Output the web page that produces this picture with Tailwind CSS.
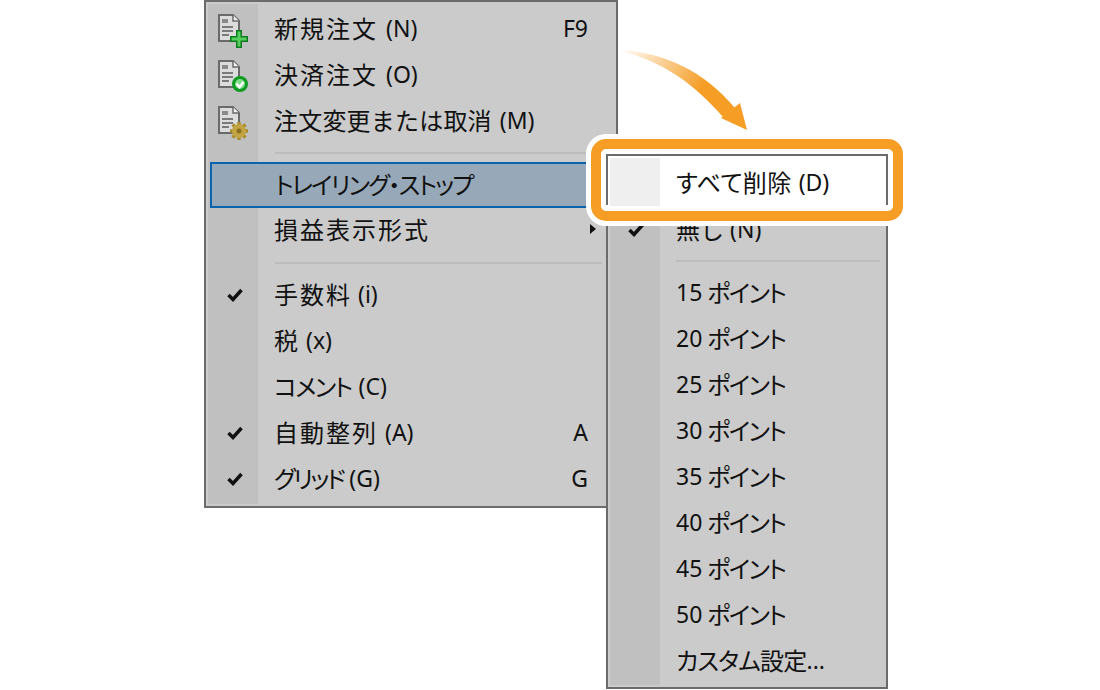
<!DOCTYPE html>
<html lang="ja">
<head>
  <meta charset="UTF-8" />
  <title>Trailing Stop Menu</title>
  <script src="https://cdn.jsdelivr.net/npm/@tailwindcss/browser@4"></script>
</head>
<body class="bg-white">
  <div class="relative w-[1100px] h-[690px] overflow-hidden bg-white text-[#111] text-[23px] font-['Noto_Sans','Noto_Sans_CJK_JP',sans-serif]">

    <!-- shared document icon -->
    <svg class="hidden">
      <symbol id="doc" viewBox="0 0 32 36">
        <path d="M2 3h14l6 6v20H2z" fill="#dcdcdc" stroke="#6a6a6a" stroke-width="2"/>
        <path d="M16 3v6h6" fill="#f4f4f4" stroke="#6a6a6a" stroke-width="1.5"/>
        <rect x="5" y="7" width="6" height="4" fill="#8a8a8a"/>
        <path d="M5 15h11M5 19h11M5 23h7" stroke="#7a7a7a" stroke-width="2"/>
      </symbol>
    </svg>

    <!-- main context menu -->
    <div class="absolute left-[204px] top-0 w-[414px] h-[508px] border-2 border-[#6b6b6b] bg-[#cbcbcb] p-[2px]">
      <div class="h-full bg-[linear-gradient(to_right,#c0c0c0_50px,#cbcbcb_50px)] pt-[1px]">
        <div class="flex items-center h-[46px]">
          <span class="w-[50px] flex justify-center pt-[4px]">
            <svg class="w-[32px] h-[36px]" viewBox="0 0 32 36">
              <use href="#doc"/>
              <path d="M19 18h6v6h6v6h-6v6h-6v-6h-6v-6h6z" fill="#0d7a1c"/>
              <path d="M20.500 19.500h3v6h6v3h-6v6h-3v-6h-6v-3h6z" fill="#55d060"/>
            </svg>
          </span>
          <span class="ml-[16px] tracking-[2px] text-[24px] leading-none font-['Noto_Sans_CJK_JP',sans-serif]">新規注文</span>
          <span class="ml-[8px]">(N)</span>
          <span class="ml-auto mr-[26px]">F9</span>
        </div>
        <div class="flex items-center h-[46px]">
          <span class="w-[50px] flex justify-center pt-[4px]">
            <svg class="w-[32px] h-[36px]" viewBox="0 0 32 36">
              <use href="#doc"/>
              <circle cx="23" cy="26" r="8" fill="#0f9a24"/>
              <circle cx="23" cy="26" r="5" fill="#7fdc88"/>
              <path d="M19.500 25.500l3 3.500 4-5" fill="none" stroke="#fff" stroke-width="2.500"/>
            </svg>
          </span>
          <span class="ml-[16px] tracking-[2px] text-[24px] leading-none font-['Noto_Sans_CJK_JP',sans-serif]">決済注文</span>
          <span class="ml-[8px]">(O)</span>
        </div>
        <div class="flex items-center h-[46px]">
          <span class="w-[50px] flex justify-center pt-[4px]">
            <svg class="w-[32px] h-[36px]" viewBox="0 0 32 36">
              <use href="#doc"/>
              <path d="M22 18v18M13 27h18M15.600 20.600l12.800 12.800M28.400 20.600l-12.800 12.800" stroke="#a88c2c" stroke-width="3.500"/>
              <circle cx="22" cy="27" r="7" fill="#c2a443"/>
              <circle cx="22" cy="27" r="2.500" fill="#8a6f1e"/>
            </svg>
          </span>
          <span class="ml-[16px] tracking-[0.2px] text-[24px] leading-none font-['Noto_Sans_CJK_JP',sans-serif]">注文変更または取消</span>
          <span class="ml-[8px]">(M)</span>
        </div>
        <div class="h-[19px] ml-[67px] mr-[12px] pt-[9px]"><div class="w-full h-[2px] bg-[#bdbdbd]"></div></div>
        <div class="flex items-center h-[46px] -mb-[2px] ml-[2px] border-2 border-r-0 border-[#0a64ad] bg-[#97a9b9]">
          <span class="ml-[63px] text-[24px] leading-none pb-[3px] tracking-[-1.700px] [font-feature-settings:'palt'] font-['Noto_Sans_CJK_JP',sans-serif]">トレイリング・ストップ</span>
        </div>
        <div class="flex items-center h-[46px]">
          <span class="w-[50px]"></span>
          <span class="ml-[16px] tracking-[2px] text-[24px] leading-none font-['Noto_Sans_CJK_JP',sans-serif]">損益表示形式</span>
          <svg class="ml-auto mr-[18px] w-[6px] h-[10px]" viewBox="0 0 6 10"><path d="M0 0l6 5-6 5z" fill="#111"/></svg>
        </div>
        <div class="h-[19px] ml-[67px] mr-[12px] pt-[10px]"><div class="w-full h-[2px] bg-[#bdbdbd]"></div></div>
        <div class="flex items-center h-[46px]">
          <span class="w-[50px] flex justify-center pl-[4px] pt-[2px]">
            <svg class="w-[16px] h-[14px]" viewBox="0 0 16 14"><path d="M1.500 7l4.500 4.500L14.500 2" fill="none" stroke="#111" stroke-width="3.500"/></svg>
          </span>
          <span class="ml-[16px] tracking-[2px] text-[24px] leading-none font-['Noto_Sans_CJK_JP',sans-serif]">手数料</span>
          <span class="ml-[6px]">(i)</span>
        </div>
        <div class="flex items-center h-[46px]">
          <span class="w-[50px]"></span>
          <span class="ml-[16px] text-[24px] leading-none font-['Noto_Sans_CJK_JP',sans-serif]">税</span>
          <span class="ml-[8px]">(x)</span>
        </div>
        <div class="flex items-center h-[46px]">
          <span class="w-[50px]"></span>
          <span class="ml-[16px] text-[24px] leading-none tracking-[-1.500px] [font-feature-settings:'palt'] font-['Noto_Sans_CJK_JP',sans-serif]">コメント</span>
          <span class="ml-[7px]">(C)</span>
        </div>
        <div class="flex items-center h-[46px]">
          <span class="w-[50px] flex justify-center pl-[4px] pt-[2px]">
            <svg class="w-[16px] h-[14px]" viewBox="0 0 16 14"><path d="M1.500 7l4.500 4.500L14.500 2" fill="none" stroke="#111" stroke-width="3.500"/></svg>
          </span>
          <span class="ml-[16px] tracking-[2px] text-[24px] leading-none font-['Noto_Sans_CJK_JP',sans-serif]">自動整列</span>
          <span class="ml-[7px]">(A)</span>
          <span class="ml-auto mr-[26px]">A</span>
        </div>
        <div class="flex items-center h-[46px]">
          <span class="w-[50px] flex justify-center pl-[4px] pt-[2px]">
            <svg class="w-[16px] h-[14px]" viewBox="0 0 16 14"><path d="M1.500 7l4.500 4.500L14.500 2" fill="none" stroke="#111" stroke-width="3.500"/></svg>
          </span>
          <span class="ml-[16px] text-[24px] leading-none tracking-[-2.500px] [font-feature-settings:'palt'] font-['Noto_Sans_CJK_JP',sans-serif]">グリッド</span>
          <span class="ml-[6px]">(G)</span>
          <span class="ml-auto mr-[26px]">G</span>
        </div>
      </div>
    </div>

    <!-- trailing stop submenu -->
    <div class="absolute left-[606px] top-[205px] w-[282px] h-[484px] border-2 border-[#6b6b6b] bg-[#cbcbcb] px-[2px]">
      <div class="bg-[linear-gradient(to_right,#c0c0c0_50px,#cbcbcb_50px)] h-[478px]">
        <div class="flex items-center h-[46px]">
          <span class="w-[50px] flex justify-center pl-[2px]">
            <svg class="w-[16px] h-[14px]" viewBox="0 0 16 14"><path d="M1.500 7l4.500 4.500L14.500 2" fill="none" stroke="#111" stroke-width="3.500"/></svg>
          </span>
          <span class="ml-[16px] pb-[2px] text-[24px] leading-none font-['Noto_Sans_CJK_JP',sans-serif]">無し</span>
          <span class="ml-[6px] pb-[2px]">(N)</span>
        </div>
        <div class="h-[16px] ml-[66px] mr-[4px] flex items-center"><div class="w-full h-[2px] bg-[#bdbdbd]"></div></div>
        <div class="flex items-center h-[46px] pl-[66px]"><span>15</span><span class="ml-[5px] text-[24px] leading-none tracking-[-1.500px] [font-feature-settings:'palt'] font-['Noto_Sans_CJK_JP',sans-serif]">ポイント</span></div>
        <div class="flex items-center h-[46px] pl-[66px]"><span>20</span><span class="ml-[5px] text-[24px] leading-none tracking-[-1.500px] [font-feature-settings:'palt'] font-['Noto_Sans_CJK_JP',sans-serif]">ポイント</span></div>
        <div class="flex items-center h-[46px] pl-[66px]"><span>25</span><span class="ml-[5px] text-[24px] leading-none tracking-[-1.500px] [font-feature-settings:'palt'] font-['Noto_Sans_CJK_JP',sans-serif]">ポイント</span></div>
        <div class="flex items-center h-[46px] pl-[66px]"><span>30</span><span class="ml-[5px] text-[24px] leading-none tracking-[-1.500px] [font-feature-settings:'palt'] font-['Noto_Sans_CJK_JP',sans-serif]">ポイント</span></div>
        <div class="flex items-center h-[46px] pl-[66px]"><span>35</span><span class="ml-[5px] text-[24px] leading-none tracking-[-1.500px] [font-feature-settings:'palt'] font-['Noto_Sans_CJK_JP',sans-serif]">ポイント</span></div>
        <div class="flex items-center h-[46px] pl-[66px]"><span>40</span><span class="ml-[5px] text-[24px] leading-none tracking-[-1.500px] [font-feature-settings:'palt'] font-['Noto_Sans_CJK_JP',sans-serif]">ポイント</span></div>
        <div class="flex items-center h-[46px] pl-[66px]"><span>45</span><span class="ml-[5px] text-[24px] leading-none tracking-[-1.500px] [font-feature-settings:'palt'] font-['Noto_Sans_CJK_JP',sans-serif]">ポイント</span></div>
        <div class="flex items-center h-[46px] pl-[66px]"><span>50</span><span class="ml-[5px] text-[24px] leading-none tracking-[-1.500px] [font-feature-settings:'palt'] font-['Noto_Sans_CJK_JP',sans-serif]">ポイント</span></div>
        <div class="flex items-center h-[46px] pl-[66px]"><span class="text-[24px] leading-none tracking-[-0.800px] [font-feature-settings:'palt'] font-['Noto_Sans_CJK_JP',sans-serif]">カスタム設定</span><span>...</span></div>
      </div>
    </div>

    <!-- callout around the delete-all row -->
    <div class="absolute left-[586px] top-[134px] w-[322px] h-[92px] rounded-[20px] bg-white p-[5px]">
      <div class="h-full rounded-[15px] border-[10px] border-[#f59d25] bg-white px-[5px] pt-[5px]">
        <div class="flex h-[51px] border-2 border-b-0 border-[#6b6b6b] px-[2px] pt-[2px]">
          <span class="w-[50px] h-[48px] bg-[#efefef]"></span>
          <span class="ml-[16px] flex items-center h-[46px] pt-[2px]">
            <span class="text-[24px] leading-none tracking-[0.400px] [font-feature-settings:'palt'] font-['Noto_Sans_CJK_JP',sans-serif]">すべて削除</span>
            <span class="ml-[7px]">(D)</span>
          </span>
        </div>
      </div>
    </div>

    <!-- curved arrow -->
    <svg class="absolute left-[610px] top-[40px] w-[150px] h-[100px]" viewBox="610 40 150 100">
      <defs>
        <linearGradient id="fade" gradientUnits="userSpaceOnUse" x1="618" y1="50" x2="725" y2="110">
          <stop offset="0" stop-color="#f59d25" stop-opacity="0"/>
          <stop offset="0.750" stop-color="#f59d25"/>
        </linearGradient>
      </defs>
      <path d="M618 50C665 52 705 72 735 108L723 117C695 85 665 62 618 50z" fill="url(#fade)"/>
      <path d="M721 118L740 103L747 130z" fill="#f59d25"/>
    </svg>
  </div>
</body>
</html>
